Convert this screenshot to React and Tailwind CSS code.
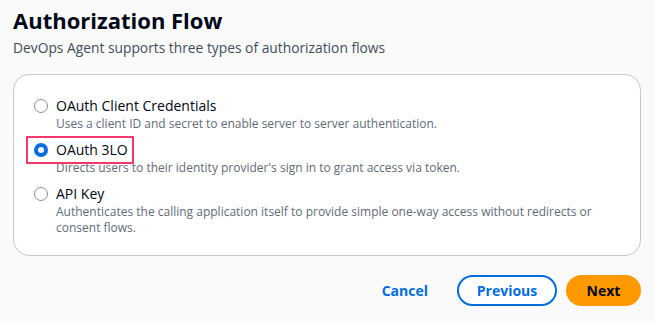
import React from "react";

function Radio({ checked }) {
  return checked ? (
    <span className="w-[14px] h-[14px] rounded-full bg-[#006ce0] flex items-center justify-center shrink-0">
      <span className="w-[6px] h-[6px] rounded-full bg-white" />
    </span>
  ) : (
    <span className="w-[14px] h-[14px] rounded-full border-[1.5px] border-[#8c8c94] bg-white shrink-0" />
  );
}

function Option({ label, desc, checked }) {
  return (
    <div className="flex flex-col">
      <div className="self-start relative flex items-center gap-[8px]">
        {checked && (
          <span className="absolute -left-[8px] -right-[6px] -top-[4px] -bottom-[4px] border-2 border-[#f0386b]" />
        )}
        <Radio checked={checked} />
        <span className="text-[14px] leading-[20px] text-[#000716]">{label}</span>
      </div>
      <p className="text-[12px] leading-[16px] text-[#5f6b7a] pl-[22px] pr-[20px]">{desc}</p>
    </div>
  );
}

export default function App() {
  return (
    <div className="w-[655px] h-[321px] bg-[#fafafa] px-[13px] pt-[3px] font-['Open_Sans',sans-serif]">
      <h1 className="text-[22px] leading-[34px] font-bold text-[#000716]">Authorization Flow</h1>
      <p className="text-[13.8px] leading-[20px] text-[#414d5c] mt-[1px]">DevOps Agent supports three types of authorization flows</p>
      <div className="mt-[16px] w-[628px] h-[182px] bg-white border border-[#c6c6cd] rounded-[16px] px-[20px] pt-[21px] flex flex-col gap-[8px]">
        <Option label="OAuth Client Credentials" desc="Uses a client ID and secret to enable server to server authentication." />
        <Option checked label="OAuth 3LO" desc="Directs users to their identity provider's sign in to grant access via token." />
        <Option label="API Key" desc="Authenticates the calling application itself to provide simple one-way access without redirects or consent flows." />
      </div>
      <div className="flex justify-end items-center mt-[19px] pr-[1px] gap-[9px]">
        <button className="px-[20px] h-[31px] text-[14px] font-bold text-[#006ce0]">Cancel</button>
        <button className="w-[100px] h-[31px] rounded-full border-2 border-[#006ce0] bg-white text-[14px] font-bold text-[#006ce0]">Previous</button>
        <button className="w-[75px] h-[31px] rounded-full bg-[#ff9900] text-[14px] font-bold text-[#000716]">Next</button>
      </div>
    </div>
  );
}
